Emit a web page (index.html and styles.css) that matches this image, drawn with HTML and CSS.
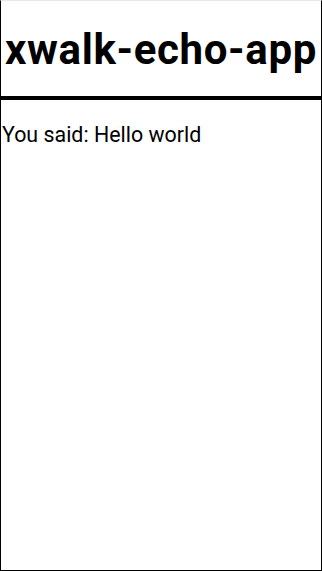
FILE: index.html
```html
<!DOCTYPE html>
<html>
<head>
<meta charset="utf-8">
<link rel="stylesheet" href="styles.css">
</head>
<body>
<div class="frame">
  <header class="header"><h1 class="title">xwalk-echo-app</h1></header>
  <p class="echo">You said: Hello world</p>
</div>
</body>
</html>
```
FILE: styles.css
```css
html, body { margin: 0; padding: 0; background: #fff; }
.frame {
  box-sizing: border-box;
  width: 322px;
  height: 571px;
  border: 1px solid #000;
  border-top: 1px solid #e8e8e8;
  font-family: Roboto, "Liberation Sans", sans-serif;
  color: #000;
}
.header {
  height: 95px;
  border-bottom: 4px solid #000;
  display: flex;
  align-items: center;
  justify-content: center;
}
.title {
  margin: 0;
  font-size: 42px;
  letter-spacing: 0.65px;
  font-weight: 700;
  line-height: 1;
  padding-top: 2px;
}
.echo {
  margin: 23px 0 0 1px;
  font-size: 21.4px;
  line-height: 24px;
}
```
